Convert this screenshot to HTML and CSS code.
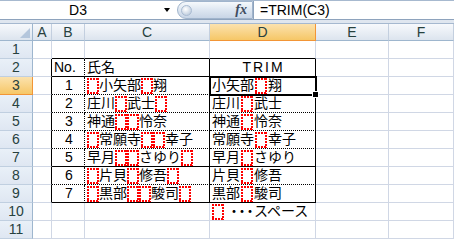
FILE: index.html
```html
<!DOCTYPE html>
<html lang="ja">
<head>
    <meta charset="UTF-8">
    <title>TRIM</title>
    <link rel="stylesheet" href="styles.css">
</head>
<body>
    <div class="fbar">
        <div class="namebox"><span class="name">D3</span><span class="drop"></span></div>
        <div class="fxbtn"><span class="grip"></span><span class="fx">fx</span></div>
        <div class="formula">=TRIM(C3)</div>
    </div>
    <div class="band"></div>

    <div class="sheet">
        <div class="row head">
            <div class="corner"><span class="tri"></span></div>
            <div class="ch">A</div>
            <div class="ch">B</div>
            <div class="ch">C</div>
            <div class="ch sel">D</div>
            <div class="ch">E</div>
            <div class="ch">F</div>
        </div>
        <div class="row">
            <div class="rh">1</div>
            <div></div>
            <div class="b-solid"></div>
            <div class="b-solid"></div>
            <div class="b-solid"></div>
            <div></div>
            <div></div>
        </div>
        <div class="row">
            <div class="rh">2</div>
            <div class="r-solid"></div>
            <div class="r-dot b-solid">No.</div>
            <div class="r-solid b-solid">氏名</div>
            <div class="r-solid b-solid title">TRIM</div>
            <div></div>
            <div></div>
        </div>
        <div class="row">
            <div class="rh sel">3</div>
            <div class="r-solid"></div>
            <div class="r-dot b-dot num">1</div>
            <div class="r-solid b-dot"><span class="sp">　</span>小矢部<span class="sp">　</span>翔</div>
            <div class="r-solid b-dot trim active">小矢部<span class="sp">　</span>翔</div>
            <div></div>
            <div></div>
        </div>
        <div class="row">
            <div class="rh">4</div>
            <div class="r-solid"></div>
            <div class="r-dot b-dot num">2</div>
            <div class="r-solid b-dot">庄川<span class="sp">　</span>武士<span class="sp">　</span></div>
            <div class="r-solid b-dot trim">庄川<span class="sp">　</span>武士</div>
            <div></div>
            <div></div>
        </div>
        <div class="row">
            <div class="rh">5</div>
            <div class="r-solid"></div>
            <div class="r-dot b-dot num">3</div>
            <div class="r-solid b-dot">神通<span class="sp">　</span><span class="sp">　</span>怜奈</div>
            <div class="r-solid b-dot trim">神通<span class="sp">　</span>怜奈</div>
            <div></div>
            <div></div>
        </div>
        <div class="row">
            <div class="rh">6</div>
            <div class="r-solid"></div>
            <div class="r-dot b-dot num">4</div>
            <div class="r-solid b-dot"><span class="sp">　</span>常願寺<span class="sp">　</span><span class="sp">　</span>幸子</div>
            <div class="r-solid b-dot trim">常願寺<span class="sp">　</span>幸子</div>
            <div></div>
            <div></div>
        </div>
        <div class="row">
            <div class="rh">7</div>
            <div class="r-solid"></div>
            <div class="r-dot b-solid num">5</div>
            <div class="r-solid b-solid">早月<span class="sp">　</span><span class="sp">　</span>さゆり<span class="sp">　</span></div>
            <div class="r-solid b-solid trim">早月<span class="sp">　</span>さゆり</div>
            <div></div>
            <div></div>
        </div>
        <div class="row">
            <div class="rh">8</div>
            <div class="r-solid"></div>
            <div class="r-dot b-dot num">6</div>
            <div class="r-solid b-dot"><span class="sp">　</span>片貝<span class="sp">　</span>修吾<span class="sp">　</span></div>
            <div class="r-solid b-dot trim">片貝<span class="sp">　</span>修吾</div>
            <div></div>
            <div></div>
        </div>
        <div class="row">
            <div class="rh">9</div>
            <div class="r-solid"></div>
            <div class="r-dot b-solid num">7</div>
            <div class="r-solid b-solid"><span class="sp">　</span>黒部<span class="sp">　</span><span class="sp">　</span>駿司<span class="sp">　</span></div>
            <div class="r-solid b-solid trim">黒部<span class="sp">　</span>駿司</div>
            <div></div>
            <div></div>
        </div>
        <div class="row">
            <div class="rh">10</div>
            <div></div>
            <div></div>
            <div></div>
            <div><span class="sp">　</span><span class="dots">・・・</span>スペース</div>
            <div></div>
            <div></div>
        </div>
        <div class="row">
            <div class="rh">11</div>
            <div></div>
            <div></div>
            <div></div>
            <div></div>
            <div></div>
            <div></div>
        </div>
    </div>
</body>
</html>
```

FILE: styles.css
```css
* {
    box-sizing: border-box;
}

body {
    margin: 0;
    width: 454px;
    height: 240px;
    overflow: hidden;
    background-color: #fff;
    font-family: "Liberation Sans", "Noto Sans CJK JP", sans-serif;
    font-size: 14px;
    color: #000;
}

/* formula bar */
.fbar {
    display: flex;
    height: 20px;
    border-top: 1px solid #a7b9cf;
    border-bottom: 1px solid #8ea3bd;
    background-color: #fff;
}

.namebox {
    width: 177px;
    display: flex;
    align-items: center;
}

.name {
    width: 156px;
    text-align: center;
    line-height: 18px;
}

.drop {
    margin-left: 8px;
    width: 0;
    height: 0;
    border-left: 3px solid transparent;
    border-right: 3px solid transparent;
    border-top: 4px solid #000;
}

.fxbtn {
    width: 76px;
    height: 18px;
    display: flex;
    align-items: center;
    justify-content: space-between;
    padding: 0 5px 0 3px;
    border: 1px solid #a0b4cc;
    border-radius: 9px 0 0 9px;
    background: linear-gradient(#f6f9fc, #dde6f1 50%, #c8d5e6);
}

.grip {
    width: 11px;
    height: 11px;
    border-radius: 50%;
    border: 1px solid #a9bbd2;
    background: radial-gradient(circle at 40% 35%, #fff, #c3d0e0 75%);
}

.fx {
    font-family: "Liberation Serif", serif;
    font-style: italic;
    font-weight: bold;
    font-size: 14px;
    color: #3e4c60;
}

.formula {
    flex: 1;
    border-left: 1px solid #8ea3bd;
    padding-left: 6px;
    line-height: 18px;
}

.band {
    height: 4px;
    background-color: #dfe6ef;
    border-bottom: 1px solid #a5b8cf;
}

/* sheet */
.row {
    display: grid;
    grid-template-columns: 33px 19px 33px 125px 106px 73px 1fr;
    height: 18px;
}

.row > div {
    border-right: 1px solid #d0d7e5;
    border-bottom: 1px solid #d0d7e5;
    padding-left: 2px;
    line-height: 17px;
    white-space: nowrap;
}

.row.head {
    height: 17px;
}

.row > .ch,
.row > .corner {
    padding: 0;
    text-align: center;
    line-height: 16px;
    color: #27413e;
    background: linear-gradient(#f7f9fc, #dce4ee);
    border-right-color: #c3cfdf;
    border-bottom-color: #9eb6ce;
}

.row > .corner {
    display: flex;
    align-items: flex-end;
    justify-content: flex-end;
    padding: 0 2px 2px 0;
    border-right-color: #9eb6ce;
}

.tri {
    width: 0;
    height: 0;
    border-left: 10px solid transparent;
    border-bottom: 10px solid #b4c6dc;
}

.row > .rh {
    padding: 0;
    text-align: center;
    color: #27413e;
    background: linear-gradient(#e9f0f8, #dfe7f2);
    border-right-color: #9eb6ce;
    border-bottom-color: #c0cfe0;
}

.row > .sel {
    background: linear-gradient(#fbe2ae, #f6c767);
    border-right-color: #f29536;
    border-bottom-color: #f29536;
}

/* table borders */
.row > .r-solid {
    border-right-color: #000;
}

.row > .r-dot {
    border-right: 1px dotted #000;
}

.row > .b-solid {
    border-bottom-color: #000;
}

.row > .b-dot {
    border-bottom: 1px dotted #000;
}

.num {
    text-align: center;
}

.title {
    text-align: center;
    letter-spacing: 2px;
}

/* full-width space marker: square red dots */
.sp {
    display: inline-block;
    vertical-align: top;
    width: 12px;
    height: 16px;
    margin-top: 1px;
    overflow: hidden;
    color: transparent;
    background:
        linear-gradient(90deg, #f00 2px, transparent 2px) top left / 3px 2px repeat-x,
        linear-gradient(90deg, #f00 2px, transparent 2px) bottom left / 3px 2px repeat-x,
        linear-gradient(#f00 2px, transparent 2px) top left / 2px 3px repeat-y,
        linear-gradient(#f00 2px, transparent 2px) top right / 2px 3px repeat-y;
}

.trim .sp {
    margin-left: 1px;
    margin-right: 1px;
}

.dots {
    margin-left: 3px;
    margin-right: 3px;
    letter-spacing: -6px;
}

/* active cell */
.active {
    position: relative;
}

.active::after {
    content: "";
    position: absolute;
    left: -1px;
    top: -1px;
    right: -2px;
    bottom: -2px;
    border: 2px solid #000;
}

.active::before {
    content: "";
    position: absolute;
    right: -3px;
    bottom: -3px;
    width: 5px;
    height: 5px;
    background-color: #000;
    box-shadow: 0 0 0 1px #fff;
    z-index: 1;
}
```
